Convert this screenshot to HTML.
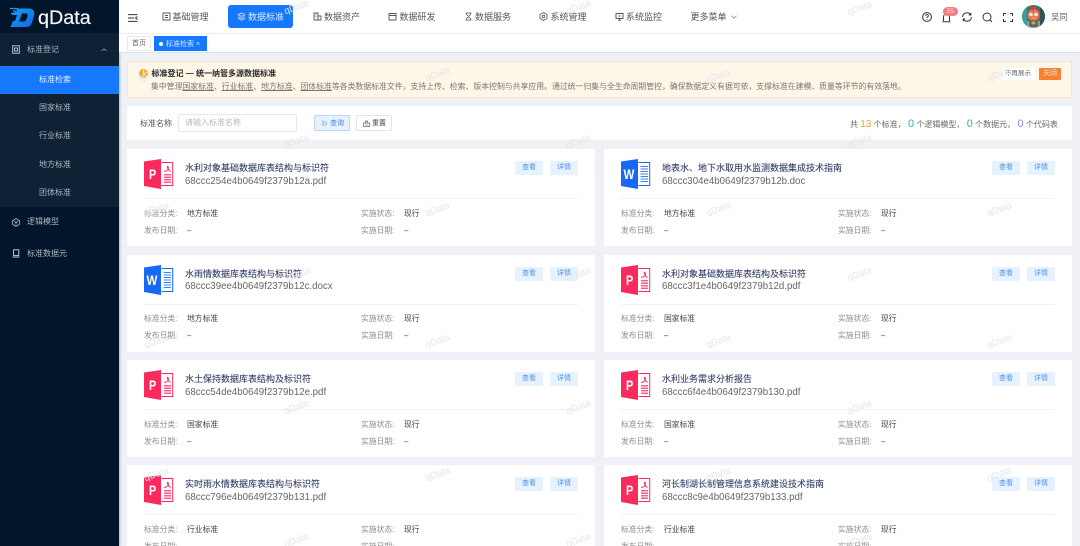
<!DOCTYPE html>
<html lang="zh"><head><meta charset="utf-8"><title>qData</title>
<style>
*{box-sizing:border-box;margin:0;padding:0}
html,body{width:1080px;height:546px;overflow:hidden;background:#eff1f6}
body{position:relative;font-family:"Liberation Sans","Noto Sans CJK SC",sans-serif;font-size:8px;color:#555;filter:blur(.3px)}
.a,.a *{white-space:nowrap}
.a{position:absolute;line-height:12px}
#side{position:absolute;left:0;top:0;width:118.5px;height:546px;background:#02152a;box-shadow:1px 0 2px rgba(0,0,0,.25)}
#sub{position:absolute;left:0;top:33px;width:118.5px;height:174px;background:#0e2135}
#act{position:absolute;left:0;top:66px;width:118.5px;height:28px;background:#1677ff}
#side .a{color:#adb6c0;font-size:8px}
#top{position:absolute;left:118.5px;top:0;width:961.5px;height:33.5px;background:#fff;border-bottom:1px solid #eceef2}
#tabs{position:absolute;left:118.5px;top:34px;width:961.5px;height:19px;background:#fff;border-bottom:1px solid #dfe2e8}
.m{font-size:9px;color:#555;line-height:12px;top:10.5px}
.mi{position:absolute;top:12px;width:9px;height:9px}
.card{position:absolute;width:468px;height:97px;background:#fff}
.card .t{position:absolute;left:58px;top:13px;font-size:9px;color:#38416a;line-height:12px;white-space:nowrap;-webkit-text-stroke:.12px #38416a}
.card .f{position:absolute;left:58px;top:26.5px;font-size:9.7px;color:#666;line-height:12px;white-space:nowrap}
.card .l{position:absolute;left:17px;height:.5px;width:434px;top:49px;border-top:1px solid #f1f2f4}
.card .k,.card .v{position:absolute;font-size:7.8px;line-height:12px;white-space:nowrap}
.card .k{color:#8c8c8c}.card .v{color:#444}
.r1{top:58.5px}.r2{top:75.5px}
.c1{left:17px}.c2{left:60px}.c3{left:234px}.c4{left:277px}
.b{position:absolute;top:12px;width:28px;height:14px;background:#e6f3ff;color:#4a90ee;font-size:7px;text-align:center;line-height:14px;border-radius:1px}
.b1{left:388px}.b2{left:423px}
.ic{position:absolute;left:17px;top:10px;width:30px;height:30px}
.wm{position:absolute;font-size:9.5px;color:#e3e5ea;transform:rotate(-20deg);line-height:12px;pointer-events:none;z-index:5}
svg{display:block;overflow:visible}
</style></head><body>

<svg width="0" height="0" style="position:absolute">
<defs>
<linearGradient id="lg" x1="0" y1="0" x2="1" y2="1"><stop offset="0" stop-color="#10a6f5"/><stop offset="1" stop-color="#1463ea"/></linearGradient>
<g id="pdf"><path d="M0 2.500 17 0v30L0 27z" fill="#fb2a5c"/><path d="M17.500 3.500H28.700V26.500H17.500" fill="#fff" stroke="#fb2a5c" stroke-width="1"/><path d="M20 12.500c2.500-.5 5.500-1.500 4-5-1-1.500-1 3 2.500 5" fill="none" stroke="#fb2a5c" stroke-width="1"/><path d="M20 15H27V16.500H20ZM20 17.500H27V19H20ZM20 20H27V21.500H20ZM20 22.500H27V24H20Z" fill="#fb5c80"/></g>
<g id="doc"><path d="M0 2.500 17 0v30L0 27z" fill="#1769f2"/><path d="M17.500 3.500H28.700V26.500H17.500" fill="#fff" stroke="#1769f2" stroke-width="1"/><path d="M19.500 7.500H27M19.500 10H27M19.500 12.500H27M19.500 15H27M19.500 17.500H27M19.500 20H27M19.500 22.500H27" fill="none" stroke="#3d83f4" stroke-width="1"/></g>
</defs>
</svg>

<div id="side">
 <div id="sub"></div><div id="act"></div>
 <svg style="position:absolute;left:9px;top:7px" width="26" height="21" viewBox="0 0 26 21"><path d="M1 1.500H9M4 4H9M2 6.500H7" stroke="#1b9df5" stroke-width="1.300" fill="none"/><path d="M8 1.500H20C25 1.500 26 5 25 9L23 15.500C22 19 20 20 17 20H1.500L4 14H6L8 8H3L5 5H8ZM13 6.500 10 14.500H14C16 14.500 17 14 17.500 12L18.500 9C19 7.500 18.500 6.500 17 6.500Z" fill="url(#lg)" fill-rule="evenodd"/></svg>
 <div class="a" style="left:38px;top:6px;font-size:19.800px;line-height:24px;color:#f4f6f8;-webkit-text-stroke:.2px #f4f6f8">qData</div>
 <svg style="position:absolute;left:12px;top:45px" width="8" height="9" viewBox="0 0 8 9"><path d="M.7.700H7.300V8.300H.7ZM2.500 3H5.500V6H2.500Z" fill="none" stroke="#b7bec6" stroke-width="1"/></svg>
 <div class="a" style="left:27px;top:44px">标准登记</div>
 <svg style="position:absolute;left:101px;top:48px" width="6" height="4" viewBox="0 0 6 4"><path d="M.5 3 3 .8 5.500 3" fill="none" stroke="#97a1ac" stroke-width=".8"/></svg>
 <div class="a" style="left:39px;top:74px;color:#e8f1ff">标准检索</div>
 <div class="a" style="left:39px;top:102px">国家标准</div>
 <div class="a" style="left:39px;top:130px">行业标准</div>
 <div class="a" style="left:39px;top:158.500px">地方标准</div>
 <div class="a" style="left:39px;top:186.500px">团体标准</div>
 <svg style="position:absolute;left:12px;top:218px" width="8" height="9" viewBox="0 0 8 9"><path d="M4 .6 7.400 2.500V6.500L4 8.400.6 6.500V2.500ZM2 3.300 4 4.500 6 3.300M4 4.500V6.800" fill="none" stroke="#b7bec6" stroke-width=".8"/></svg>
 <div class="a" style="left:27px;top:216px">逻辑模型</div>
 <svg style="position:absolute;left:12px;top:249px" width="8" height="9" viewBox="0 0 8 9"><path d="M1.500.8H6.800V6.500H1.500ZM.6 8H7.400" fill="none" stroke="#b7bec6" stroke-width="1"/></svg>
 <div class="a" style="left:27px;top:248px">标准数据元</div>
</div>

<div id="top"></div>
<svg style="position:absolute;left:128px;top:14px" width="10" height="8" viewBox="0 0 10 8"><path d="M0 .6H9.500M0 4H6M0 7.400H9.500M9.500 2.500 7.500 4 9.500 5.500" fill="none" stroke="#333" stroke-width="1"/></svg>
<div class="a" style="left:228px;top:5px;width:64.500px;height:23px;background:#1677ff;border-radius:3px"></div>

<svg class="mi" style="left:162px" viewBox="0 0 9 9"><path d="M1 1H8V8H1ZM3 3.500H6M3 5.500H6" fill="none" stroke="#555" stroke-width=".9"/></svg>
<div class="a m" style="left:172.500px">基础管理</div>
<svg class="mi" style="left:236.500px" viewBox="0 0 9 9"><path d="M4.500 1 8 2.700 4.500 4.400 1 2.700ZM1 4.700 4.500 6.400 8 4.700M1 6.500 4.500 8.200 8 6.500" fill="none" stroke="#cfe2ff" stroke-width=".8"/></svg>
<div class="a m" style="left:248px;color:#dcebff">数据标准</div>
<svg class="mi" style="left:312.500px" viewBox="0 0 9 9"><path d="M1 8V1H5V8ZM5 4H8V8H5ZM2.500 3H3.500M2.500 5H3.500" fill="none" stroke="#555" stroke-width=".9"/></svg>
<div class="a m" style="left:324px">数据资产</div>
<svg class="mi" style="left:388px" viewBox="0 0 9 9"><path d="M1 1.500H8V8H1ZM1 3.500H8" fill="none" stroke="#555" stroke-width=".9"/></svg>
<div class="a m" style="left:399.500px">数据研发</div>
<svg class="mi" style="left:463.500px" viewBox="0 0 9 9"><path d="M1.500 1H7.500M1.500 8H7.500M2.500 1V2.500L6.500 6.500V8M6.500 1V2.500L2.500 6.500V8" fill="none" stroke="#555" stroke-width=".8"/></svg>
<div class="a m" style="left:475px">数据服务</div>
<svg class="mi" style="left:539px" viewBox="0 0 9 9"><path d="M4.500.6 8 2.500V6.500L4.500 8.400 1 6.500V2.500Z" fill="none" stroke="#555" stroke-width=".8"/><circle cx="4.500" cy="4.500" r="1.300" fill="none" stroke="#555" stroke-width=".8"/></svg>
<div class="a m" style="left:550.500px">系统管理</div>
<svg class="mi" style="left:614.500px" viewBox="0 0 9 9"><path d="M1 1.500H8V6.500H1ZM4.500 6.500V8M3 8.200H6M3.500 4H5.500" fill="none" stroke="#555" stroke-width=".9"/></svg>
<div class="a m" style="left:626px">系统监控</div>
<div class="a m" style="left:690.500px">更多菜单</div>
<svg style="position:absolute;left:731px;top:15px" width="6" height="4" viewBox="0 0 6 4"><path d="M.5.800 3 3.200 5.500.8" fill="none" stroke="#777" stroke-width=".7"/></svg>

<svg style="position:absolute;left:922px;top:12px" width="10" height="10" viewBox="0 0 10 10"><circle cx="5" cy="5" r="4.400" fill="none" stroke="#333" stroke-width="1"/><path d="M3.600 3.800C3.700 2 6.500 2.200 6.400 3.800 6.300 4.800 5 4.800 5 6M5 7V7.800" fill="none" stroke="#333" stroke-width=".9"/></svg>
<svg style="position:absolute;left:942px;top:13px" width="9" height="10" viewBox="0 0 9 10"><path d="M1.500 8V4C1.500 2 3 1 4.500 1S7.500 2 7.500 4V8M.5 8.800H8.500" fill="none" stroke="#333" stroke-width="1"/></svg>
<div class="a" style="left:943px;top:7px;width:14.500px;height:9px;border-radius:4.500px;background:#f27f82;color:#fde3e3;font-size:6.500px;line-height:9px;text-align:center">55</div>
<svg style="position:absolute;left:962px;top:12px" width="10" height="10" viewBox="0 0 10 10"><path d="M.6 5A4.400 4.400 0 0 1 8.500 2.500M9.400 5A4.400 4.400 0 0 1 1.500 7.500M8.800 .8V3H6.700M1.200 9.200V7H3.300" fill="none" stroke="#333" stroke-width="1"/></svg>
<svg style="position:absolute;left:982px;top:12px" width="11" height="11" viewBox="0 0 11 11"><circle cx="5" cy="5" r="4" fill="none" stroke="#333" stroke-width="1"/><path d="M8 8 10 10" stroke="#333" stroke-width="1"/></svg>
<svg style="position:absolute;left:1003px;top:12.500px" width="10" height="9" viewBox="0 0 10 9"><path d="M.5 3V.5H3M7 .5H9.500V3M.5 6V8.500H3M7 8.500H9.500V6" fill="none" stroke="#333" stroke-width="1.100"/></svg>
<svg style="position:absolute;left:1022px;top:5px" width="23" height="23" viewBox="0 0 23 23"><defs><clipPath id="av"><circle cx="11.500" cy="11.500" r="11.500"/></clipPath></defs><g clip-path="url(#av)"><rect width="23" height="23" fill="#4f6a70"/><rect y="16" width="23" height="7" fill="#a09488"/><rect x="0" y="0" width="5" height="23" fill="#3f9aa0"/><rect x="18" y="0" width="5" height="23" fill="#34505a"/><circle cx="11.500" cy="10" r="6" fill="#e8764c"/><path d="M8 2 11 5 14 2" fill="#d4472f" stroke="#d4472f"/><circle cx="9" cy="9.500" r="1.800" fill="#f6efe2"/><circle cx="14" cy="9.500" r="1.800" fill="#f6efe2"/><path d="M10 12H13L11.500 14Z" fill="#e9b53e"/><rect x="7.500" y="15.500" width="8" height="6" fill="#3e5f6c"/><rect x="9.500" y="16.500" width="4" height="3" fill="#e0a050"/></g></svg>
<div class="a" style="left:1051px;top:11px;font-size:8.300px;color:#666">吴同</div>

<div id="tabs"></div>
<div class="a" style="left:127px;top:36px;width:24px;height:15px;border:1px solid #e6e8ec;background:#fff;font-size:7px;line-height:13.500px;text-align:center;color:#666">首页</div>
<div class="a" style="left:153.500px;top:36px;width:53.500px;height:15px;background:#1677ff;color:#d9e9ff;font-size:7px;line-height:15px"><span style="position:absolute;left:5px;top:5.500px;width:4px;height:4px;border-radius:50%;background:#fff"></span><span style="position:absolute;left:12.500px;top:.5px">标准检索</span><span style="position:absolute;left:42.500px;top:.5px;font-size:7px">×</span></div>

<div class="a" style="left:127px;top:61px;width:945px;height:36.500px;background:#fef6e7;border:1px solid #fae8bd;border-radius:1px"></div>
<div class="a" style="left:139px;top:69px;width:9px;height:9px;border-radius:50%;background:#f0ac3d;color:#fff;font-size:7px;line-height:9px;text-align:center;font-weight:bold">!</div>
<div class="a" style="left:151.500px;top:68px;font-size:8px;color:#2a2a2a;font-weight:bold;z-index:6">标准登记 — 统一纳管多源数据标准</div>
<div class="a" style="left:151px;top:81px;font-size:7.870px;color:#777;z-index:6">集中管理<u>国家标准</u>、<u>行业标准</u>、<u>地方标准</u>、<u>团体标准</u>等各类数据标准文件，支持上传、检索、版本控制与共享应用。通过统一归集与全生命周期管控，确保数据定义有据可依，支撑标准在建模、质量等环节的有效落地。</div>
<div class="a" style="left:1001.500px;top:68px;width:33px;height:12px;background:#fff;font-size:6.500px;line-height:12px;text-align:center;color:#666">不再展示</div>
<div class="a" style="left:1039px;top:68px;width:22px;height:12px;background:#f58232;font-size:7px;line-height:12px;text-align:center;color:#fde6d2;border-radius:1px">关闭</div>

<div class="a" style="left:127px;top:106px;width:945px;height:34px;background:#fff"></div>
<div class="a" style="left:140px;top:117.500px;font-size:8px;color:#555">标准名称</div>
<div class="a" style="left:178px;top:114px;width:119px;height:18px;border:1px solid #e6e8ec;font-size:8px;line-height:16px;color:#b5b8bf;padding-left:6px;border-radius:1px">请输入标准名称</div>
<div class="a" style="left:314px;top:115px;width:36px;height:16px;background:#e8f2ff;border:1px solid #bcd7fb;font-size:7px;line-height:15px;color:#3b86ee;padding-left:15px;border-radius:1px">查询</div>
<svg style="position:absolute;left:321px;top:120px" width="6" height="6" viewBox="0 0 6 6"><circle cx="3.800" cy="3.500" r="1.700" fill="none" stroke="#6aa5f2" stroke-width=".7"/><path d="M.5 1H3M.5 3H1.500M.5 5H2" stroke="#6aa5f2" stroke-width=".6"/></svg>
<div class="a" style="left:356px;top:115px;width:36px;height:16px;background:#fff;border:1px solid #e3e5ea;font-size:7px;line-height:15px;color:#444;padding-left:15px;border-radius:1px">重置</div>
<svg style="position:absolute;left:363px;top:119.500px" width="7" height="7" viewBox="0 0 7 7"><path d="M.5 3H6.500V6.500H.5ZM2.500 3V1H4.500V3M2.500 5H4.500" fill="none" stroke="#666" stroke-width=".7"/></svg>
<div class="a" style="left:850px;top:118px;font-size:8px;color:#666;width:212px;line-height:12px">共 <span style="color:#f59a3c;font-size:10px">13</span> 个标准，<span style="color:#3aa0f2;font-size:11px;margin-left:2.400px">0</span> 个逻辑模型，<span style="color:#3cb391;font-size:11px;margin-left:2.400px">0</span> 个数据元，<span style="color:#8f83e6;font-size:11px;margin-left:2.400px">0</span> 个代码表</div>

<div class="card" style="left:127px;top:149px"><svg class="ic" viewBox="0 0 30 30"><use href="#pdf"/><text transform="translate(5 20) scale(.8 1)" font-family="Liberation Sans" font-size="13.500" font-weight="bold" fill="#fff">P</text></svg><div class="t">水利对象基础数据库表结构与标识符</div><div class="f">68ccc254e4b0649f2379b12a.pdf</div><div class="b b1">查看</div><div class="b b2">详情</div><div class="l"></div><div class="k r1 c1">标准分类:</div><div class="v r1 c2">地方标准</div><div class="k r1 c3">实施状态:</div><div class="v r1 c4">现行</div><div class="k r2 c1">发布日期:</div><div class="v r2 c2">–</div><div class="k r2 c3">实施日期:</div><div class="v r2 c4">–</div></div>

<div class="card" style="left:604px;top:149px"><svg class="ic" viewBox="0 0 30 30"><use href="#doc"/><text transform="translate(2.500 20) scale(.85 1)" font-family="Liberation Sans" font-size="13.500" font-weight="bold" fill="#fff">W</text></svg><div class="t">地表水、地下水取用水监测数据集成技术指南</div><div class="f">68ccc304e4b0649f2379b12b.doc</div><div class="b b1">查看</div><div class="b b2">详情</div><div class="l"></div><div class="k r1 c1">标准分类:</div><div class="v r1 c2">地方标准</div><div class="k r1 c3">实施状态:</div><div class="v r1 c4">现行</div><div class="k r2 c1">发布日期:</div><div class="v r2 c2">–</div><div class="k r2 c3">实施日期:</div><div class="v r2 c4">–</div></div>

<div class="card" style="left:127px;top:254.500px"><svg class="ic" viewBox="0 0 30 30"><use href="#doc"/><text transform="translate(2.500 20) scale(.85 1)" font-family="Liberation Sans" font-size="13.500" font-weight="bold" fill="#fff">W</text></svg><div class="t">水雨情数据库表结构与标识符</div><div class="f">68ccc39ee4b0649f2379b12c.docx</div><div class="b b1">查看</div><div class="b b2">详情</div><div class="l"></div><div class="k r1 c1">标准分类:</div><div class="v r1 c2">地方标准</div><div class="k r1 c3">实施状态:</div><div class="v r1 c4">现行</div><div class="k r2 c1">发布日期:</div><div class="v r2 c2">–</div><div class="k r2 c3">实施日期:</div><div class="v r2 c4">–</div></div>

<div class="card" style="left:604px;top:254.500px"><svg class="ic" viewBox="0 0 30 30"><use href="#pdf"/><text transform="translate(5 20) scale(.8 1)" font-family="Liberation Sans" font-size="13.500" font-weight="bold" fill="#fff">P</text></svg><div class="t">水利对象基础数据库表结构及标识符</div><div class="f">68ccc3f1e4b0649f2379b12d.pdf</div><div class="b b1">查看</div><div class="b b2">详情</div><div class="l"></div><div class="k r1 c1">标准分类:</div><div class="v r1 c2">国家标准</div><div class="k r1 c3">实施状态:</div><div class="v r1 c4">现行</div><div class="k r2 c1">发布日期:</div><div class="v r2 c2">–</div><div class="k r2 c3">实施日期:</div><div class="v r2 c4">–</div></div>

<div class="card" style="left:127px;top:360px"><svg class="ic" viewBox="0 0 30 30"><use href="#pdf"/><text transform="translate(5 20) scale(.8 1)" font-family="Liberation Sans" font-size="13.500" font-weight="bold" fill="#fff">P</text></svg><div class="t">水土保持数据库表结构及标识符</div><div class="f">68ccc54de4b0649f2379b12e.pdf</div><div class="b b1">查看</div><div class="b b2">详情</div><div class="l"></div><div class="k r1 c1">标准分类:</div><div class="v r1 c2">国家标准</div><div class="k r1 c3">实施状态:</div><div class="v r1 c4">现行</div><div class="k r2 c1">发布日期:</div><div class="v r2 c2">–</div><div class="k r2 c3">实施日期:</div><div class="v r2 c4">–</div></div>

<div class="card" style="left:604px;top:360px"><svg class="ic" viewBox="0 0 30 30"><use href="#pdf"/><text transform="translate(5 20) scale(.8 1)" font-family="Liberation Sans" font-size="13.500" font-weight="bold" fill="#fff">P</text></svg><div class="t">水利业务需求分析报告</div><div class="f">68ccc6f4e4b0649f2379b130.pdf</div><div class="b b1">查看</div><div class="b b2">详情</div><div class="l"></div><div class="k r1 c1">标准分类:</div><div class="v r1 c2">国家标准</div><div class="k r1 c3">实施状态:</div><div class="v r1 c4">现行</div><div class="k r2 c1">发布日期:</div><div class="v r2 c2">–</div><div class="k r2 c3">实施日期:</div><div class="v r2 c4">–</div></div>

<div class="card" style="left:127px;top:465px"><svg class="ic" viewBox="0 0 30 30"><use href="#pdf"/><text transform="translate(5 20) scale(.8 1)" font-family="Liberation Sans" font-size="13.500" font-weight="bold" fill="#fff">P</text></svg><div class="t">实时雨水情数据库表结构与标识符</div><div class="f">68ccc796e4b0649f2379b131.pdf</div><div class="b b1">查看</div><div class="b b2">详情</div><div class="l"></div><div class="k r1 c1">标准分类:</div><div class="v r1 c2">行业标准</div><div class="k r1 c3">实施状态:</div><div class="v r1 c4">现行</div><div class="k r2 c1">发布日期:</div><div class="v r2 c2">–</div><div class="k r2 c3">实施日期:</div><div class="v r2 c4">–</div></div>

<div class="card" style="left:604px;top:465px"><svg class="ic" viewBox="0 0 30 30"><use href="#pdf"/><text transform="translate(5 20) scale(.8 1)" font-family="Liberation Sans" font-size="13.500" font-weight="bold" fill="#fff">P</text></svg><div class="t">河长制湖长制管理信息系统建设技术指南</div><div class="f">68ccc8c9e4b0649f2379b133.pdf</div><div class="b b1">查看</div><div class="b b2">详情</div><div class="l"></div><div class="k r1 c1">标准分类:</div><div class="v r1 c2">行业标准</div><div class="k r1 c3">实施状态:</div><div class="v r1 c4">现行</div><div class="k r2 c1">发布日期:</div><div class="v r2 c2">–</div><div class="k r2 c3">实施日期:</div><div class="v r2 c4">–</div></div>

<div class="wm" style="left:284px;top:2px">qData</div><div class="wm" style="left:566px;top:2px">qData</div><div class="wm" style="left:847px;top:3px">qData</div>
<div class="wm" style="left:139px;top:69px">qData</div><div class="wm" style="left:425px;top:69px">qData</div><div class="wm" style="left:706px;top:71px">qData</div><div class="wm" style="left:987px;top:69px">qData</div>
<div class="wm" style="left:284px;top:136px">qData</div><div class="wm" style="left:566px;top:136px">qData</div><div class="wm" style="left:847px;top:136px">qData</div>
<div class="wm" style="left:144px;top:204px">qData</div><div class="wm" style="left:425px;top:204px">qData</div><div class="wm" style="left:706px;top:204px">qData</div><div class="wm" style="left:987px;top:204px">qData</div>
<div class="wm" style="left:286px;top:269px">qData</div><div class="wm" style="left:566px;top:269px">qData</div><div class="wm" style="left:847px;top:269px">qData</div>
<div class="wm" style="left:144px;top:336px">qData</div><div class="wm" style="left:425px;top:336px">qData</div><div class="wm" style="left:706px;top:336px">qData</div><div class="wm" style="left:987px;top:336px">qData</div>
<div class="wm" style="left:284px;top:402px">qData</div><div class="wm" style="left:566px;top:402px">qData</div><div class="wm" style="left:847px;top:402px">qData</div>
<div class="wm" style="left:144px;top:469px">qData</div><div class="wm" style="left:425px;top:469px">qData</div><div class="wm" style="left:706px;top:469px">qData</div><div class="wm" style="left:987px;top:469px">qData</div>
<div class="wm" style="left:284px;top:535px">qData</div><div class="wm" style="left:566px;top:535px">qData</div><div class="wm" style="left:847px;top:535px">qData</div>
</body></html>
